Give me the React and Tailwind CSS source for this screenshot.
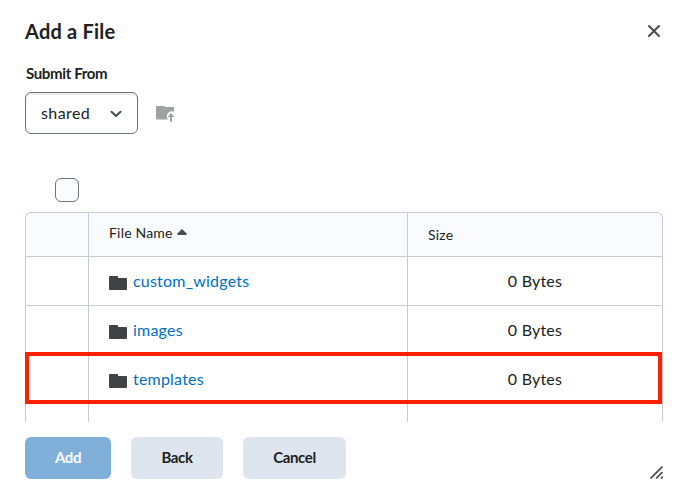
import React from "react";

const files = ["custom_widgets", "images", "templates"];

function Folder() {
  return (
    <svg width="18" height="14" viewBox="0 0 18 14" className="mt-[3px] mr-1.5 shrink-0" fill="#3f4345">
      <path d="M1 0h7.2a.8.8 0 0 1 .8.8V2h8a1 1 0 0 1 1 1v10a1 1 0 0 1-1 1H1a1 1 0 0 1-1-1V1a1 1 0 0 1 1-1z" />
    </svg>
  );
}

export default function App() {
  return (
    <div className="relative flex h-[501px] w-[690px] flex-col bg-white pl-[25px] font-['Lato',sans-serif] text-[#202122]">
      <header className="flex h-16 shrink-0 items-center justify-between pr-[29px]">
        <h1 className="pb-[2px] text-[20px] leading-6 font-bold tracking-[0.2px]">Add a File</h1>
        <button aria-label="Close" className="mb-[2px]">
          <svg width="14" height="14" viewBox="0 0 14 14" fill="none" stroke="#494c4e" strokeWidth="2" strokeLinecap="round">
            <path d="M2 2l10 10M12 2L2 12" />
          </svg>
        </button>
      </header>
      <label className="h-7 shrink-0 pl-px text-[15px] leading-[18px] font-bold tracking-[-0.35px]">Submit From</label>
      <div className="flex h-[42px] shrink-0 items-center">
        <button className="flex h-[42px] w-[113px] items-center justify-between rounded-md border border-[#6e7376] px-[15px] text-[16px] tracking-[0.4px] shadow-[inset_0_2px_0_0_#e9edf3]">
          shared
          <svg width="12" height="8" viewBox="0 0 12 8" fill="none" stroke="#494c4e" strokeWidth="2" strokeLinecap="round" strokeLinejoin="round" className="mt-[2px]">
            <path d="M1.5 1.7L6 6l4.500-4.300" />
          </svg>
        </button>
        <svg width="20" height="18" viewBox="0 0 20 18" className="mt-[2px] ml-[18px]" fill="#a0a1a2">
          <path d="M1 1h7.200a.8.8 0 0 1 .8.8V2h8.200a.8.8 0 0 1 .8.8v3.900a5 5 0 0 0-7.200 4.300c0 1.500.5 2.700 1.300 3.500H1a1 1 0 0 1-1-1V2a1 1 0 0 1 1-1z" />
          <path d="M15 8l3.500 4H16v4.800h-2V12h-2.500z" />
        </svg>
      </div>
      <div className="flex h-[78px] shrink-0 items-end pb-[10px] pl-[30px]">
        <span className="size-6 rounded-md border border-[#6e7376] bg-[#f9fbff]" />
      </div>
      <div className="relative h-[210px] w-[638px] shrink-0">
        <div className="h-[210px] overflow-hidden rounded-t-md border border-b-0 border-[#c3cbd6]">
          <div className="grid h-11 grid-cols-[63px_319px_254px] border-b border-[#c3cbd6] bg-[#f9fbff] text-[14px] tracking-[0.2px]">
            <span className="border-r border-[#c3cbd6]" />
            <span className="flex items-center border-r border-[#c3cbd6] pb-1 pl-5">
              File Name
              <svg width="10" height="6" viewBox="0 0 10 6" className="mb-px ml-1" fill="#494c4e">
                <path d="M5 0l4.700 4.600Q10 6 9 6H1Q0 6 .3 4.600z" />
              </svg>
            </span>
            <span className="flex items-center pl-5">Size</span>
          </div>
          {files.map((name) => (
            <div key={name} className="grid h-[49px] grid-cols-[63px_319px_254px] border-b border-[#c3cbd6] text-[16px] tracking-[0.21px]">
              <span className="border-r border-[#c3cbd6]" />
              <span className="flex items-center border-r border-[#c3cbd6] pl-5 text-[#006fbf]">
                <Folder />
                {name}
              </span>
              <span className="flex items-center justify-center">0 Bytes</span>
            </div>
          ))}
          <div className="grid h-[19px] grid-cols-[63px_319px_254px]">
            <span className="border-r border-[#c3cbd6]" />
            <span className="border-r border-[#c3cbd6]" />
          </div>
        </div>
        <div className="absolute top-[140px] left-0 h-[52px] w-[637px] border-4 border-[#ff2000]" />
      </div>
      <footer className="flex h-[57px] shrink-0 items-end gap-5 text-[15px] font-bold tracking-[-0.35px]">
        <button className="h-[42px] w-[86px] rounded-md bg-[#80b0da] pb-px text-white">Add</button>
        <button className="h-[42px] w-[92px] rounded-md bg-[#dfe5ef] pb-px">Back</button>
        <button className="h-[42px] w-[103px] rounded-md bg-[#dfe5ef] pb-px">Cancel</button>
      </footer>
      <svg width="13" height="13" viewBox="0 0 13 13" className="absolute right-[27px] bottom-[22px]" fill="none" stroke="#494c4e" strokeWidth="1.700">
        <path d="M.5 12.500L12.500.5M6 12.500L12.500 6M11 12.500L13 10.500" />
      </svg>
    </div>
  );
}
